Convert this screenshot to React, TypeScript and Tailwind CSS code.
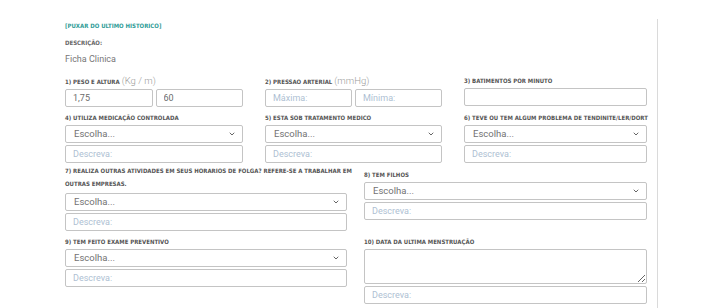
import React from "react";
import { ChevronDown } from "lucide-react";

const labelFont = {
  fontFamily: "'Liberation Sans Narrow', 'DejaVu Sans Condensed', 'Liberation Sans', sans-serif",
};
const bodyFont = { fontFamily: "Roboto, 'Liberation Sans', sans-serif" };

const Label = ({
  children,
  unit,
  className = "",
}: {
  children: React.ReactNode;
  unit?: string;
  className?: string;
}) => (
  <div
    className={`text-[6px] leading-[13px] font-bold uppercase text-[#555] ${className}`}
    style={labelFont}
  >
    {children}
    {unit && (
      <span className="ml-[2px] text-[9.5px] font-light normal-case text-[#9a9a9a]" style={bodyFont}>
        {unit}
      </span>
    )}
  </div>
);

const TextInput = ({ value, placeholder }: { value?: string; placeholder?: string }) => (
  <input
    readOnly
    defaultValue={value}
    placeholder={placeholder}
    className="block w-full h-[18px] border border-[#c4c4c4] rounded-[2px] px-[7px] text-[9px] text-[#6b6b6b] placeholder:text-[#aebfd3] outline-none bg-white"
    style={bodyFont}
  />
);

const SelectBox = () => (
  <div
    className="flex items-center justify-between h-[18px] border border-[#c4c4c4] rounded-[2px] pl-[8px] pr-[6px] text-[9.5px] text-[#727272] bg-white"
    style={bodyFont}
  >
    <span>Escolha...</span>
    <ChevronDown size={8} strokeWidth={3} className="text-[#666]" />
  </div>
);

const Choice = ({ className = "" }: { className?: string }) => (
  <div className={className}>
    <SelectBox />
    <div className="mt-[2px]">
      <TextInput placeholder="Descreva:" />
    </div>
  </div>
);

export default function App() {
  return (
    <div className="w-[725px] h-[308px] bg-white overflow-hidden">
      <div className="mt-[19px] w-[658px] border-r border-[#dadada] pl-[65px] pr-[10px] pb-[20px]">
        <div
          className="pt-[3px] text-[6px] leading-[8px] font-bold uppercase text-[#2f9c97]"
          style={labelFont}
        >
          [PUXAR DO ULTIMO HISTORICO]
        </div>
        <div
          className="mt-[9px] text-[6px] leading-[8px] font-bold uppercase text-[#666]"
          style={labelFont}
        >
          DESCRIÇÃO:
        </div>
        <div className="mt-[6px] text-[9px] leading-[12px] text-[#777]" style={bodyFont}>
          Ficha Clinica
        </div>

        <div className="mt-[9px] grid grid-cols-[178px_177px_183px] gap-x-[22px]">
          <div>
            <Label unit="(Kg / m)" className="mb-[1px]">1) Peso e altura</Label>
            <div className="grid grid-cols-2 gap-[3px]">
              <TextInput value="1,75" />
              <TextInput value="60" />
            </div>
          </div>
          <div>
            <Label unit="(mmHg)" className="mb-[1px]">2) Pressao arterial</Label>
            <div className="grid grid-cols-2 gap-[3px]">
              <TextInput placeholder="Máxima:" />
              <TextInput placeholder="Mínima:" />
            </div>
          </div>
          <div>
            <Label className="mb-[1px]">3) Batimentos por minuto</Label>
            <TextInput />
          </div>

          <div className="mt-[4px]">
            <Label className="mb-[1px]">4) Utiliza medicação controlada</Label>
            <Choice />
          </div>
          <div className="mt-[4px]">
            <Label className="mb-[1px]">5) Esta sob tratamento medico</Label>
            <Choice />
          </div>
          <div className="mt-[4px]">
            <Label className="mb-[1px] whitespace-nowrap">6) Teve ou tem algum problema de tendinite/ler/dort</Label>
            <Choice />
          </div>
        </div>

        <div className="mt-[1px] grid grid-cols-[282px_283px] gap-x-[17px]">
          <div>
            <Label className="mb-[3px]">
              <span className="whitespace-nowrap">
                7) Realiza outras atividades em seus horarios de folga? Refere-se a trabalhar em
              </span>
              <br />
              outras empresas.
            </Label>
            <Choice />
          </div>
          <div className="pt-[4px]">
            <Label className="mb-[1px]">8) Tem filhos</Label>
            <Choice />
          </div>

          <div className="mt-[4px]">
            <Label className="mb-[1px]">9) Tem feito exame preventivo</Label>
            <Choice />
          </div>
          <div className="mt-[4px]">
            <Label className="mb-[1px]">10) Data da ultima menstruação</Label>
            <textarea
              readOnly
              className="block w-full h-[35px] border border-[#c4c4c4] rounded-[2px] outline-none bg-white"
            />
            <div className="mt-[2px]">
              <TextInput placeholder="Descreva:" />
            </div>
          </div>
        </div>
      </div>
    </div>
  );
}
